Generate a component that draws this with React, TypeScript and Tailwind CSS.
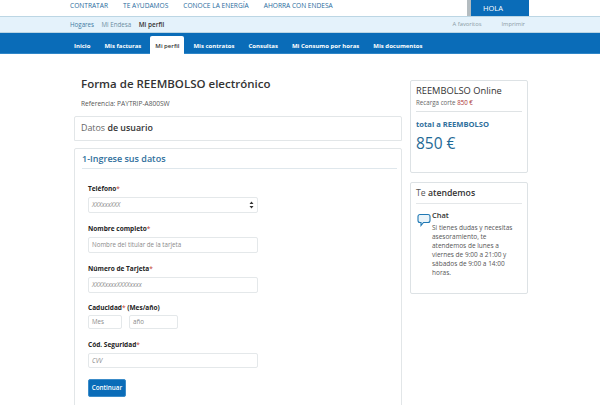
import React from "react";

const top = ["CONTRATAR", "TE AYUDAMOS", "CONOCE LA ENERGÍA", "AHORRA CON ENDESA"];
const tabs = ["Inicio", "Mis facturas", "Mi perfil", "Mis contratos", "Consultas", "Mi Consumo por horas", "Mis documentos"];

function Label({ children, extra }: { children: React.ReactNode; extra?: string }) {
  return (
    <div className="text-[6.5px] leading-[9px] font-bold text-[#222] whitespace-nowrap">
      {children}
      <span className="text-[#c0392b] font-normal">*</span>
      {extra && <span> {extra}</span>}
    </div>
  );
}

function Field({ ph, italic, w = "w-[170px]", h = "h-[16px]", mt = "mt-[4px]", children }: { ph: string; italic?: boolean; w?: string; h?: string; mt?: string; children?: React.ReactNode }) {
  return (
    <div className={`${w} ${h} ${mt} bg-white border border-[#e4e8ea] rounded-[2px] flex items-center justify-between pl-[3px] pr-[3px] text-[6.2px] text-[#8a8a8a] ${italic ? "italic" : ""}`}>
      <span className="whitespace-nowrap">{ph}</span>
      {children}
    </div>
  );
}

export default function App() {
  return (
    <div className="w-[600px] h-[405px] overflow-hidden bg-white text-[#333]" style={{ fontFamily: '"Open Sans", sans-serif' }}>
      <header className="h-[16px] flex bg-white">
        <nav className="flex gap-[15px] pl-[70px] w-[467px] text-[6.6px] leading-[11px] text-[#1f6a9c] whitespace-nowrap">
          {top.map((t) => (
            <span key={t}>{t}</span>
          ))}
        </nav>
        <div className="w-[4px] h-[16px] bg-[#b4bcc0]" />
        <div className="w-[58px] h-[16px] bg-[#0a6cb8] text-white text-[7.5px] leading-[16px] pl-[12px]">HOLA</div>
      </header>
      <div className="h-[17px] bg-[#e4f2fb] border-t border-b border-[#bcd6e4] flex items-center justify-between pl-[70px] pr-[75px] text-[6.2px]">
        <div className="flex items-center gap-[7.5px] text-[#6b8ca0]">
          <span className="text-[#3f7ba3]">Hogares</span>
          <span>Mi Endesa</span>
          <span className="text-[#333] text-[6.4px] font-semibold">Mi perfil</span>
        </div>
        <div className="flex gap-[20px] text-[#8a9aa4] text-[5.8px]">
          <span>A favoritos</span>
          <span>Imprimir</span>
        </div>
      </div>
      <div className="h-[21px] bg-[#0a6cb8] border-b border-[#2e86c8] flex items-end pl-[74px] gap-[14px] text-[6px] font-bold text-white">
        {tabs.map((t) =>
          t === "Mi perfil" ? (
            <span key={t} className="h-[18px] px-[5px] -mx-[5px] -mb-px pt-[2px] bg-white text-[#333] rounded-t-[2px] flex items-center justify-center font-semibold whitespace-nowrap">
              {t}
            </span>
          ) : (
            <span key={t} className="h-[17px] pt-[3px] flex items-center whitespace-nowrap">
              {t}
            </span>
          )
        )}
      </div>
      <main className="flex items-start pl-[74px] pt-[18px]">
        <div className="w-[328px] shrink-0">
          <h1 className="pl-[7px] text-[11.5px] leading-[18px] text-[#333] font-semibold mt-[3px]">Forma de REEMBOLSO electrónico</h1>
          <p className="pl-[7px] mt-[6px] text-[6.6px] leading-[10px] text-[#555]">Referencia: PAYTRIP-A800SW</p>
          <div className="mt-[7px] h-[25px] border border-[#e2e6e8] rounded-t-[2px] pl-[6px] text-[8.9px] leading-[21px] text-[#666]">
            Datos <span className="font-semibold text-[#333]">de usuario</span>
          </div>
          <section className="mt-[7px] border border-[#e2e6e8] rounded-t-[2px] pl-[7px] h-[300px]">
            <h2 className="text-[9px] leading-[19px] font-semibold text-[#2f6f9c] border-b border-[#dfe7ec] h-[20px] w-[315px]">1-Ingrese sus datos</h2>
            <div className="pl-[6px] pt-[15px] flex flex-col">
              <Label>Teléfono</Label>
              <Field ph="XXXxxxXXX" italic>
                <svg width="5" height="8" viewBox="0 0 5 8" className="text-[#333]">
                  <path d="M2.5 0.5L4.5 3H0.5zM2.5 7.5L0.5 5h4z" fill="currentColor" />
                </svg>
              </Field>
              <div className="mt-[11px]"><Label>Nombre completo</Label></div>
              <Field ph="Nombre del titular de la tarjeta" />
              <div className="mt-[11px]"><Label>Número de Tarjeta</Label></div>
              <Field ph="XXXXxxxxXXXXxxxx" italic />
              <div className="mt-[10px]"><Label extra="(Mes/año)">Caducidad</Label></div>
              <div className="flex gap-[7px]">
                <Field ph="Mes" w="w-[34px]" h="h-[14px]" mt="mt-[3px]" />
                <Field ph="año" w="w-[49px]" h="h-[14px]" mt="mt-[3px]" />
              </div>
              <div className="mt-[11px]"><Label>Cód. Seguridad</Label></div>
              <Field ph="CVV" italic h="h-[15px]" />
              <button className="mt-[11px] w-[38px] h-[18px] bg-[#0a6cb8] border border-[#3b8cc9] rounded-[2px] text-white text-[6.3px] font-semibold">Continuar</button>
            </div>
          </section>
        </div>
        <aside className="ml-[8px] w-[118px] shrink-0 mt-[8px] flex flex-col gap-[9px]">
          <div className="h-[93px] border border-[#dde2e5] rounded-[2px] px-[5px] pt-[3px]">
            <div className="text-[9.3px] leading-[14px] text-[#333]">REEMBOLSO Online</div>
            <div className="text-[6.2px] leading-[10px] text-[#666] pb-[3px] border-b border-[#dfe3e5]">
              Recarga corte <span className="text-[#a33]">850 €</span>
            </div>
            <div className="mt-[6px] text-[7.6px] leading-[13px] font-bold text-[#2f6f9c]">total a REEMBOLSO</div>
            <div className="text-[15.5px] leading-[24px] text-[#1f6a96]">850 €</div>
          </div>
          <div className="h-[112px] border border-[#dde2e5] rounded-[2px] px-[5px] pt-[3px]">
            <div className="text-[8.7px] leading-[15px] text-[#555] pb-[2px] border-b border-[#e4e7e9]">
              Te <span className="font-semibold text-[#333]">atendemos</span>
            </div>
            <div className="flex mt-[6px]">
              <svg width="14" height="14" viewBox="0 0 14 14" className="mt-[3px] ml-[1px] shrink-0">
                <path d="M3 1.5h8a2 2 0 0 1 2 2v4a2 2 0 0 1-2 2H6.5L4 12.5V9.5H3a2 2 0 0 1-2-2v-4a2 2 0 0 1 2-2z" fill="#eaf4fa" stroke="#1f78b4" strokeWidth="1.1" />
              </svg>
              <div className="ml-[1px]">
                <div className="text-[7.5px] leading-[11px] font-semibold text-[#333]">Chat</div>
                <p className="mt-[2px] text-[6.5px] leading-[9.1px] text-[#555] w-[86px]">
                  Si tienes dudas y necesitas asesoramiento, te atendemos de lunes a viernes de 9:00 a 21:00 y sábados de 9:00 a 14:00 horas.
                </p>
              </div>
            </div>
          </div>
        </aside>
      </main>
    </div>
  );
}
